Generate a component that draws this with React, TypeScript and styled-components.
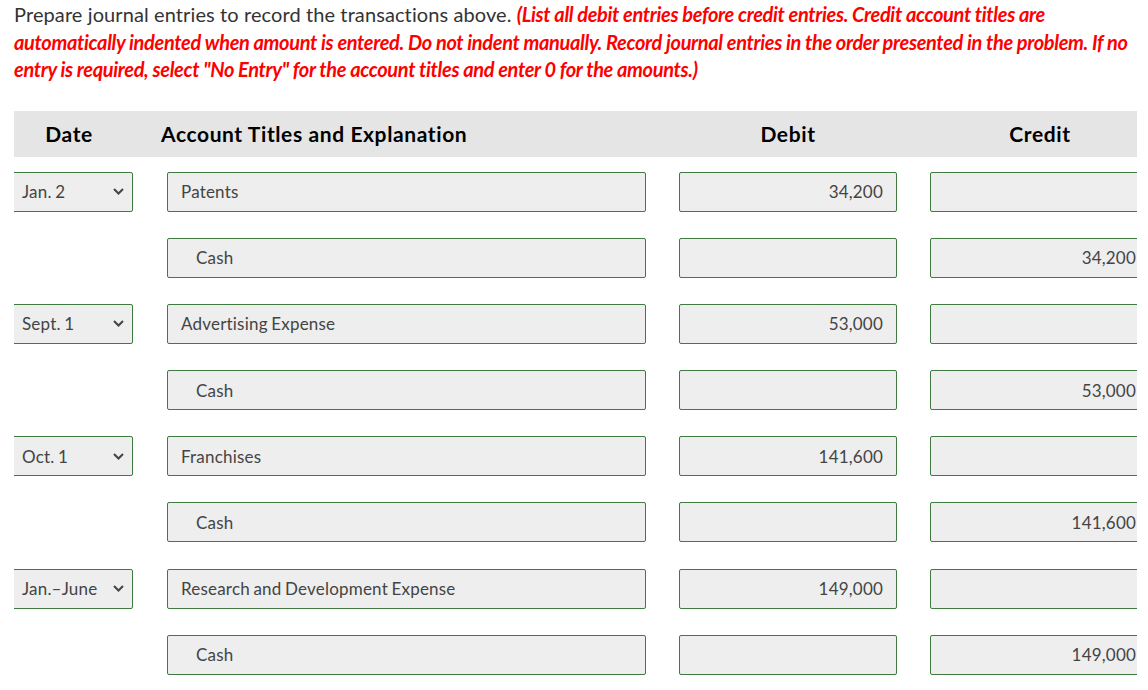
import React from "react";
import styled, { createGlobalStyle } from "styled-components";

const Global = createGlobalStyle`
  html, body { margin: 0; padding: 0; background: #fff; }
  body { font-family: Lato, "Open Sans", sans-serif; }
`;

const Page = styled.div`
  width: 1123px;
  margin-left: 14px;
  padding-top: 1px;
  overflow: hidden;
`;

const Intro = styled.p`
  margin: 0;
  font-size: 20px;
  line-height: 27.5px;
  color: #333;
  letter-spacing: 0.1px;
`;

const Note = styled.span`
  color: #ff0000;
  font-weight: 700;
  font-style: italic;
  letter-spacing: -0.35px;
`;

const Grid = styled.div`
  display: grid;
  grid-template-columns: 120px 479px 218px 220px;
  column-gap: 33px;
`;

const Header = styled(Grid)`
  margin-top: 27px;
  height: 46px;
  background: #e5e5e5;
  align-items: center;
  font-weight: 700;
  font-size: 21px;
  letter-spacing: 0.6px;
  color: #000;
`;

const HeadCell = styled.div<{ $align?: "left" | "center"; $shift?: number }>`
  text-align: ${(p) => p.$align ?? "center"};
  margin-left: ${(p) => p.$shift ?? 0}px;
  white-space: nowrap;
`;

const Rows = styled.div`
  display: flex;
  flex-direction: column;
  gap: 26.2px;
  margin-top: 15px;
`;

const Row = styled(Grid)`
  height: 40px;
`;

const Field = styled.div<{ $right?: boolean; $indent?: boolean }>`
  box-sizing: border-box;
  height: 40px;
  border: 1px solid #3f7a3f;
  border-radius: 2px;
  background: #eeeeee;
  display: flex;
  align-items: center;
  justify-content: ${(p) => (p.$right ? "flex-end" : "flex-start")};
  padding: 0 ${(p) => (p.$right ? "13px" : "0")} 0
    ${(p) => (p.$indent ? "28px" : p.$right ? "0" : "13px")};
  font-size: 17px;
  letter-spacing: 0.2px;
  word-spacing: -1px;
  color: #444;
  white-space: nowrap;
`;

const Select = styled(Field)`
  margin-left: -4px;
  margin-right: 1px;
  padding: 0 8px 0 11px;
  justify-content: space-between;
`;

const Chevron = () => (
  <svg width="11" height="7" viewBox="0 0 11 7">
    <polyline
      points="1,1 5.5,5.5 10,1"
      fill="none"
      stroke="#444"
      strokeWidth="2"
    />
  </svg>
);

type Entry = {
  date?: string;
  account: string;
  debit?: string;
  credit?: string;
};

const entries: Entry[] = [
  { date: "Jan. 2", account: "Patents", debit: "34,200" },
  { account: "Cash", credit: "34,200" },
  { date: "Sept. 1", account: "Advertising Expense", debit: "53,000" },
  { account: "Cash", credit: "53,000" },
  { date: "Oct. 1", account: "Franchises", debit: "141,600" },
  { account: "Cash", credit: "141,600" },
  { date: "Jan.\u2013June", account: "Research and Development Expense", debit: "149,000" },
  { account: "Cash", credit: "149,000" },
];

export default function App() {
  return (
    <>
      <Global />
      <Page>
        <Intro>
          Prepare journal entries to record the transactions above.{" "}
          <Note>
            (List all debit entries before credit entries. Credit account titles are
            automatically indented when amount is entered. Do not indent manually. Record
            journal entries in the order presented in the problem. If no entry is required,
            select "No Entry" for the account titles and enter 0 for the amounts.)
          </Note>
        </Intro>
        <Header>
          <HeadCell $shift={-10}>Date</HeadCell>
          <HeadCell $align="left" $shift={-6}>
            Account Titles and Explanation
          </HeadCell>
          <HeadCell>Debit</HeadCell>
          <HeadCell>Credit</HeadCell>
        </Header>
        <Rows>
          {entries.map((e, i) => (
            <Row key={i}>
              {e.date ? (
                <Select>
                  <span>{e.date}</span>
                  <Chevron />
                </Select>
              ) : (
                <div />
              )}
              <Field $indent={!!e.credit}>{e.account}</Field>
              <Field $right>{e.debit ?? ""}</Field>
              <Field $right>{e.credit ?? ""}</Field>
            </Row>
          ))}
        </Rows>
      </Page>
    </>
  );
}
